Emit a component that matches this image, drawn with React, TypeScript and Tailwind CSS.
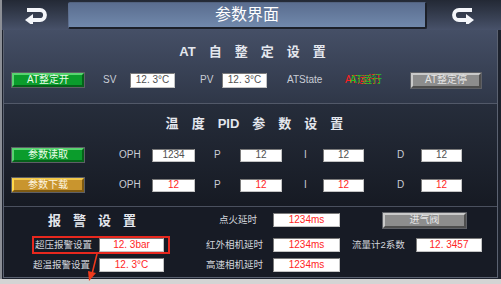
import React from 'react';

type BtnProps = { label: string; tone: 'green' | 'gold' | 'gray'; w: string; h: string };

// bevelled HMI push button
function HmiButton({ label, tone, w, h }: BtnProps) {
  const face =
    tone === 'green'
      ? 'bg-[#0b9c2c] border-t-[#58d470] border-l-[#58d470] border-b-[#05621a] border-r-[#05621a] text-[#eaffea]'
      : tone === 'gold'
        ? 'bg-[#c9952e] border-t-[#f2c84a] border-l-[#ffd84a] border-b-[#7e5a12] border-r-[#7e5a12] text-[#fff6e0]'
        : 'bg-[#8d8d8d] border-t-[#c9c9c9] border-l-[#c9c9c9] border-b-[#4e4e4e] border-r-[#4e4e4e] text-[#e6e6e6]';
  return (
    <div className={`${w} ${h} shrink-0 bg-[#5e6066] p-[1px]`}>
      <div className={`flex h-full w-full items-center justify-center border-2 text-[10px] leading-none whitespace-nowrap ${face}`}>
        {label}
      </div>
    </div>
  );
}

type FieldProps = { value: string; w: string; h?: string; red?: boolean };

function Field({ value, w, h = 'h-[13px]', red = false }: FieldProps) {
  return (
    <div
      className={`${w} ${h} flex shrink-0 items-center justify-center border border-t-[#7a7a7a] border-l-[#7a7a7a] border-b-[#c4c4c4] border-r-[#c4c4c4] bg-white text-[10px] leading-none whitespace-nowrap ${
        red ? 'text-[#ff2626]' : 'text-[#505050]'
      }`}
    >
      {value}
    </div>
  );
}

function BackIcon({ flip = false }: { flip?: boolean }) {
  return (
    <svg width="24" height="17" viewBox="0 0 24 17" className={flip ? '-scale-x-100' : ''}>
      <path d="M3 3 H16 a5 5 0 0 1 0 10 H8" fill="none" stroke="#f4f6fa" strokeWidth="3.8" />
      <polygon points="1,13 9,7 9,19" fill="#f4f6fa" />
    </svg>
  );
}

function Spaced({ parts, gap }: { parts: string[]; gap: string }) {
  return (
    <div className={`flex items-center ${gap} text-[13px] leading-none font-bold text-[#e4e7ee]`}>
      {parts.map((p, i) => (
        <span key={i}>{p}</span>
      ))}
    </div>
  );
}

export default function App() {
  const label = 'text-[10px] leading-none text-[#c9cdd6] whitespace-nowrap';
  const cn = 'text-[9.5px] leading-none text-[#d2d5dc] whitespace-nowrap';

  return (
    <div className="relative h-[284px] w-[501px] overflow-hidden bg-[#d4d4d4] font-['Liberation_Sans','Noto_Sans_CJK_SC',sans-serif]">
      <div className="h-[279px] w-[501px] border-l-2 border-[#8c8f96] bg-[#1d222d]">
        {/* header */}
        <div className="flex h-[30px] items-center bg-gradient-to-b from-[#232935] to-[#48526a]">
          <div className="flex w-[66px] justify-center pl-[1px] pt-[1px]">
            <BackIcon />
          </div>
          <div className="flex h-[27px] w-[359px] items-center justify-center rounded-[2px] border-t border-l border-b-2 border-r-2 border-t-[#52627f] border-l-[#5d6e8e] border-b-[#1c2029] border-r-[#1c2029] bg-gradient-to-b from-[#5a6d8f] to-[#7189ac] text-[16px] leading-none text-white">
            参数界面
          </div>
          <div className="flex w-[72px] justify-center pt-[1px]">
            <BackIcon flip />
          </div>
        </div>

        {/* framed body */}
        <div className="ml-[1px] h-[248px] w-[495px] border-x border-b border-[#5b6271]">
          {/* AT section */}
          <div className="flex h-[74px] flex-col border-b border-[#525969] bg-gradient-to-b from-[#454f66] to-[#2f3748]">
            <div className="mt-[14px] flex h-[15px] justify-center pl-[4px]">
              <Spaced parts={['AT', '自', '整', '定', '设', '置']} gap="gap-[13px]" />
            </div>
            <div className="mt-[13px] flex h-[16px] items-center">
              <div className="w-[7px]" />
              <HmiButton label="AT整定开" tone="green" w="w-[74px]" h="h-[16px]" />
              <div className={`w-[45px] pl-[18px] ${label}`}>SV</div>
              <Field value="12. 3°C" w="w-[45px]" h="h-[15px]" />
              <div className={`w-[47px] pl-[25px] ${label}`}>PV</div>
              <Field value="12. 3°C" w="w-[45px]" h="h-[15px]" />
              <div className={`w-[78px] pl-[20px] ${label}`}>ATState</div>
              <div className="w-[65px] shrink-0 text-[10px] leading-none whitespace-nowrap">
                <span className="relative inline-block">
                  <span className="text-[#ff2020]">AT运行!</span>
                  <span className="absolute left-[5px] top-0 text-[#22c522]">AT运行</span>
                </span>
              </div>
              <HmiButton label="AT整定停" tone="gray" w="w-[72px]" h="h-[17px]" />
            </div>
          </div>

          {/* PID section */}
          <div className="flex h-[103px] flex-col border-b border-[#4a505e] bg-gradient-to-b from-[#262d3b] to-[#161a23]">
            <div className="mt-[12px] flex h-[15px] justify-center pl-[8px]">
              <Spaced parts={['温', '度', 'PID', '参', '数', '设', '置']} gap="gap-[13px]" />
            </div>
            <div className="mt-[16px] flex h-[16px] items-center">
              <div className="w-[7px]" />
              <HmiButton label="参数读取" tone="green" w="w-[74px]" h="h-[16px]" />
              <div className={`w-[67px] pl-[34px] ${label}`}>OPH</div>
              <Field value="1234" w="w-[43px]" />
              <div className={`w-[45px] pl-[19px] ${label}`}>P</div>
              <Field value="12" w="w-[42px]" />
              <div className={`w-[41px] pl-[22px] ${label}`}>I</div>
              <Field value="12" w="w-[41px]" />
              <div className={`w-[57px] pl-[33px] ${label}`}>D</div>
              <Field value="12" w="w-[41px]" />
            </div>
            <div className="mt-[14px] flex h-[16px] items-center">
              <div className="w-[7px]" />
              <HmiButton label="参数下载" tone="gold" w="w-[74px]" h="h-[16px]" />
              <div className={`w-[67px] pl-[34px] ${label}`}>OPH</div>
              <Field value="12" w="w-[43px]" red />
              <div className={`w-[45px] pl-[19px] ${label}`}>P</div>
              <Field value="12" w="w-[42px]" red />
              <div className={`w-[41px] pl-[22px] ${label}`}>I</div>
              <Field value="12" w="w-[41px]" red />
              <div className={`w-[57px] pl-[33px] ${label}`}>D</div>
              <Field value="12" w="w-[41px]" red />
            </div>
          </div>

          {/* alarm section */}
          <div className="flex h-[70px] flex-col bg-[#171b25] pt-[2px]">
            <div className="flex h-[22px] items-center">
              <div className="w-[166px] pl-[44px]">
                <Spaced parts={['报', '警', '设', '置']} gap="gap-[12px]" />
              </div>
              <div className={`w-[103px] pr-[16px] text-right ${cn}`}>点火延时</div>
              <Field value="1234ms" w="w-[67px]" h="h-[14px]" red />
              <div className="w-[42px]" />
              <HmiButton label="进气阀" tone="gray" w="w-[85px]" h="h-[17px]" />
            </div>
            <div className="mt-[3px] flex h-[21px] items-center">
              <div className="w-[166px] pl-[28px]">
                <div className="flex h-[18px] w-[138px] items-center border-2 border-[#e8281e]">
                  <div className={`w-[65px] pl-[1px] ${cn}`}>超压报警设置</div>
                  <Field value="12. 3bar" w="w-[65px]" h="h-[14px]" red />
                </div>
              </div>
              <div className={`w-[103px] pr-[10px] text-right ${cn}`}>红外相机延时</div>
              <Field value="1234ms" w="w-[67px]" h="h-[14px]" red />
              <div className={`w-[76px] pl-[12px] ${cn}`}>流量计2系数</div>
              <Field value="12. 3457" w="w-[66px]" h="h-[14px]" red />
            </div>
            <div className="flex h-[20px] items-center">
              <div className="flex w-[166px] items-center pl-[29px]">
                <div className={`w-[66px] ${cn}`}>超温报警设置</div>
                <Field value="12. 3°C" w="w-[65px]" h="h-[14px]" red />
              </div>
              <div className={`w-[103px] pr-[10px] text-right ${cn}`}>高速相机延时</div>
              <Field value="1234ms" w="w-[67px]" h="h-[14px]" red />
            </div>
          </div>
        </div>
      </div>

      {/* red annotation arrow */}
      <svg className="absolute left-0 top-0" width="501" height="284" viewBox="0 0 501 284">
        <line x1="97" y1="254" x2="92" y2="274" stroke="#f03a1c" strokeWidth="1.6" />
        <polygon points="89,281 88,271 96,273" fill="#f03a1c" />
      </svg>
    </div>
  );
}
